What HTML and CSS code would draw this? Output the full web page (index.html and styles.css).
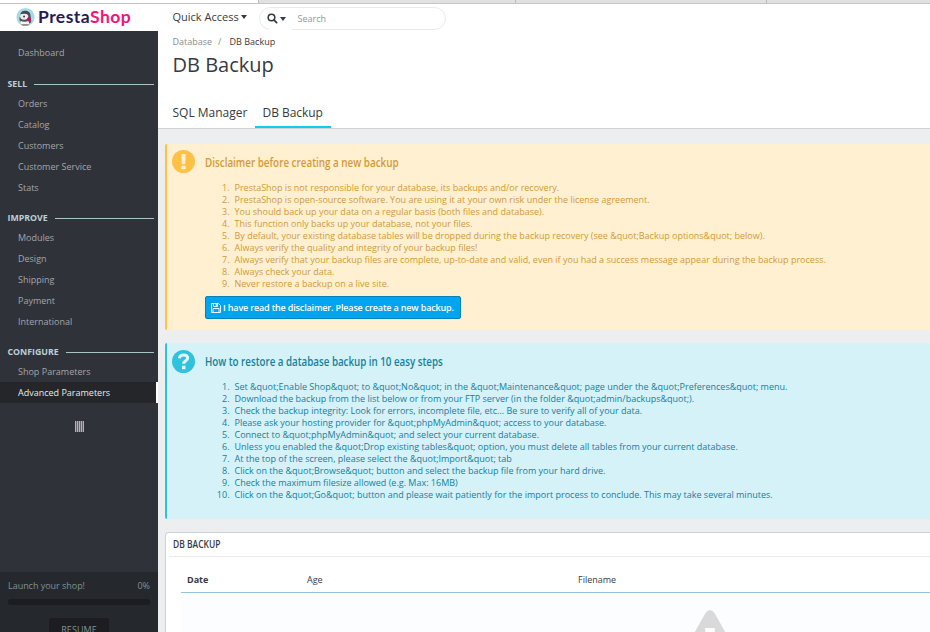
FILE: index.html
```html
<!DOCTYPE html>
<html lang="en">
<head>
<meta charset="utf-8">
<title>DB Backup</title>
<link rel="stylesheet" href="styles.css">
</head>
<body>
<div class="tabstrip"><span></span><span></span><span></span><span></span></div>
<div class="app">
  <aside class="sidebar">
    <div class="logo">
      <svg class="puffin" viewBox="0 0 20 20"><circle cx="10" cy="10" r="9.6" fill="#a4dbe8"/><path d="M4 14c-1-3 0-5 1-6 0-4 3-5 6-4.500 3 .5 4.500 3 4.500 6l.5 6c-3 3-9 3-12-1.500z" fill="#50545e"/><ellipse cx="8.600" cy="9.500" rx="4.300" ry="3.300" fill="#f1eeea"/><path d="M5 14c2 1.500 6 1.500 8 0l1 3c-3 2-7 2-9 0z" fill="#f7f7f5"/><path d="M4.500 7c2-4.500 8-4.500 10.500 0l-2 .5c-3-1.500-5-1.500-8.500-.5z" fill="#464a54"/><circle cx="8.500" cy="9.500" r="1" fill="#303544"/><path d="M12 11c2-2 4 0 4 3l-2-.5-2 1z" fill="#df0067"/><path d="M5 17.300h9l-2 2H7z" fill="#a58d79"/></svg>
      <span class="brand"><b>Presta</b><i>Shop</i></span>
    </div>
    <nav class="menu">
      <a class="item first">Dashboard</a>
      <h3>SELL</h3>
      <a class="item">Orders</a><a class="item">Catalog</a><a class="item">Customers</a><a class="item">Customer Service</a><a class="item">Stats</a>
      <h3>IMPROVE</h3>
      <a class="item">Modules</a><a class="item">Design</a><a class="item">Shipping</a><a class="item">Payment</a><a class="item">International</a>
      <h3>CONFIGURE</h3>
      <a class="item">Shop Parameters</a><a class="item active">Advanced Parameters</a>
      <div class="grip"></div>
    </nav>
    <div class="launch">
      <div class="launch-row"><span>Launch your shop!</span><span>0%</span></div>
      <div class="progress"></div>
      <div class="resume">RESUME</div>
    </div>
  </aside>
  <main>
    <header>
      <div class="toolbar">
        <span class="quick">Quick Access</span><span class="caret"></span>
        <div class="search">
          <div class="search-type"><svg viewBox="0 0 12 12"><circle cx="4.900" cy="4.900" r="3.600" fill="none" stroke="#363a41" stroke-width="1.700"/><path d="M7.500 7.500l3 3" stroke="#363a41" stroke-width="2" stroke-linecap="round"/></svg><span class="caret"></span></div>
          <span class="placeholder">Search</span>
        </div>
      </div>
      <div class="crumbs"><span>Database</span><i>/</i><b>DB Backup</b></div>
      <h1>DB Backup</h1>
      <div class="tabs"><a class="tab">SQL Manager</a><a class="tab current">DB Backup</a></div>
    </header>
    <section class="alert warn">
      <svg class="badge" viewBox="0 0 23 23"><circle cx="11.500" cy="11.500" r="11.500" fill="#ffc046"/><path d="M9.300 4h4.400l-.5 10.300H9.800zM9.400 15.700h4.200v3.600H9.400z" fill="#fff0d2"/></svg>
      <div class="copy">
        <h2><span class="h-warn">Disclaimer before creating a new backup</span></h2>
        <ol>
          <li>PrestaShop is not responsible for your database, its backups and/or recovery.</li>
          <li>PrestaShop is open-source software. You are using it at your own risk under the license agreement.</li>
          <li>You should back up your data on a regular basis (both files and database).</li>
          <li>This function only backs up your database, not your files.</li>
          <li>By default, your existing database tables will be dropped during the backup recovery (see &amp;quot;Backup options&amp;quot; below).</li>
          <li>Always verify the quality and integrity of your backup files!</li>
          <li>Always verify that your backup files are complete, up-to-date and valid, even if you had a success message appear during the backup process.</li>
          <li>Always check your data.</li>
          <li>Never restore a backup on a live site.</li>
        </ol>
        <button><svg viewBox="0 0 10 10"><path d="M.5.5h7l2 2v7h-9zM2.500.5v3h4v-3M5.300 1v2M2 9.500v-4h6v4" fill="none" stroke="#fff" stroke-width=".9"/></svg><span>I have read the disclaimer. Please create a new backup.</span></button>
      </div>
    </section>
    <section class="alert info">
      <svg class="badge" viewBox="0 0 23 23"><circle cx="11.500" cy="11.500" r="11.500" fill="#2fc2dd"/><path d="M7.300 8.300c.5-4.600 8.600-4.300 8.400-.3 0 2.700-4 2.800-4 5.700" fill="none" stroke="#e4f8fc" stroke-width="3"/><path d="M10 15.700h3.500v3.500H10z" fill="#e4f8fc"/></svg>
      <div class="copy">
        <h2><span class="h-info">How to restore a database backup in 10 easy steps</span></h2>
        <ol>
          <li>Set &amp;quot;Enable Shop&amp;quot; to &amp;quot;No&amp;quot; in the &amp;quot;Maintenance&amp;quot; page under the &amp;quot;Preferences&amp;quot; menu.</li>
          <li>Download the backup from the list below or from your FTP server (in the folder &amp;quot;admin/backups&amp;quot;).</li>
          <li>Check the backup integrity: Look for errors, incomplete file, etc... Be sure to verify all of your data.</li>
          <li>Please ask your hosting provider for &amp;quot;phpMyAdmin&amp;quot; access to your database.</li>
          <li>Connect to &amp;quot;phpMyAdmin&amp;quot; and select your current database.</li>
          <li>Unless you enabled the &amp;quot;Drop existing tables&amp;quot; option, you must delete all tables from your current database.</li>
          <li>At the top of the screen, please select the &amp;quot;Import&amp;quot; tab</li>
          <li>Click on the &amp;quot;Browse&amp;quot; button and select the backup file from your hard drive.</li>
          <li>Check the maximum filesize allowed (e.g. Max: 16MB)</li>
          <li>Click on the &amp;quot;Go&amp;quot; button and please wait patiently for the import process to conclude. This may take several minutes.</li>
        </ol>
      </div>
    </section>
    <section class="panel">
      <div class="panel-head"><span>DB BACKUP</span></div>
      <div class="table">
        <div class="thead"><b>Date</b><span>Age</span><span>Filename</span></div>
        <div class="empty"><svg viewBox="0 0 48 42"><path d="M19.500 3q4.500-6 9 0L47 36q2 6-4 6H5q-6 0-4-6z" fill="#d9d9d9"/><path d="M19 18h10l-1 13h-8zM19.500 33h9v6h-9z" fill="#fcfdfe"/></svg></div>
      </div>
    </section>
  </main>
</div>
</body>
</html>
```
FILE: styles.css
```css
* { box-sizing: border-box; }
body { margin: 0; width: 930px; height: 632px; overflow: hidden; background: #edeef0; font-family: "Open Sans", sans-serif; font-size: 9px; color: #363a41; }
h1, h2, h3, ol { margin: 0; padding: 0; font-weight: 400; }
.tabstrip { height: 4px; display: grid; grid-template-columns: 259px 257px 251px 1fr; border-bottom: 1px solid #c6c6c6; background: #e1e1e1; }
.tabstrip span { border-right: 1px solid #bcbcbc; }
.tabstrip span:first-child { background: #fff; }
.tabstrip span:last-child { border: 0; }
.app { display: flex; height: 628px; }
.sidebar { width: 158px; flex: none; display: flex; flex-direction: column; background: #30323a; }
.logo { height: 27px; flex: none; background: #fff; display: flex; padding: 3px 0 0 16px; gap: 3px; }
.puffin { width: 19px; height: 20px; flex: none; }
.brand { font: 700 17.5px/20px Lato, sans-serif; letter-spacing: .45px; white-space: nowrap; color: #251b5b; }
.brand b { font-weight: 700; }
.brand i { font-style: normal; color: #f5127b; }
.menu { flex: 1; padding-top: 11px; }
.item { display: block; height: 21px; line-height: 21px; padding-left: 18px; color: #a3a5a8; }
.menu h3 { display: flex; align-items: center; gap: 7px; height: 19px; margin-top: 10px; padding: 1px 4px 0 7.5px; font-size: 8.8px; font-weight: 700; color: #bad0d8; }
.menu .first + h3 { margin-top: 11px; }
.menu h3::after { content: ""; flex: 1; height: 1px; background: #a8c5cc; }
.item.active { background: #242629; color: #e8e9ea; border-right: 2px solid #fff; }
.grip { width: 9px; height: 11px; margin: 18px 0 0 75px; background: repeating-linear-gradient(90deg, #b1b2b4 0 1px, #62646a 1px 2px); }
.launch { height: 60px; flex: none; background: #25282c; color: #7f9297; padding: 7px 8px 0; }
.launch-row { display: flex; justify-content: space-between; height: 14px; line-height: 14px; }
.launch-row span:first-child { letter-spacing: -.03px; }
.progress { height: 6px; margin-top: 6px; border-radius: 3px; background: #1c1d20; }
.resume { width: 60px; height: 26px; margin: 13px auto 0; border-radius: 2px; background: #1c1d20; text-align: center; line-height: 23px; letter-spacing: .1px; }
main { flex: 1; min-width: 0; }
header { height: 125px; background: #fff; border-bottom: 1px solid #d0d2d5; padding-left: 14.5px; overflow: hidden; }
.toolbar { display: flex; align-items: flex-start; height: 29px; padding-top: 3px; }
.quick { font-size: 11px; line-height: 19px; white-space: nowrap; width: 68.5px; }
.caret { border: 3.5px solid transparent; border-top: 4px solid #363a41; border-bottom: 0; }
.toolbar > .caret { margin-top: 8px; }
.search { display: flex; align-items: center; width: 187px; height: 23px; margin-left: 11.5px; border: 1px solid #e9eaeb; border-radius: 12px; }
.search-type { display: flex; align-items: center; gap: 2px; height: 23px; width: 32px; padding-left: 7px; background: linear-gradient(#fff, #fff) 9px 100% / 23px 2px no-repeat; }
.search-type svg { width: 11px; height: 11px; }
.placeholder { color: #969799; padding-left: 6px; }
.crumbs { display: flex; height: 18px; line-height: 18px; color: #8b8d91; }
.crumbs i { width: 17.5px; padding-left: 6px; color: #72a446; font-style: normal; }
.crumbs b { font-weight: 400; color: #363a41; }
h1 { margin-top: 1px; font-size: 20px; line-height: 26px; }
.tabs { display: flex; margin-top: 19px; height: 31px; font-size: 12px; line-height: 31px; }
.tab { width: 82.5px; white-space: nowrap; }
.current { width: 76px; padding-left: 7.5px; border-bottom: 2px solid #0fcce8; letter-spacing: -.04px; }
.alert { display: flex; margin: 15px 0 0 7px; border-left: 2px solid; border-radius: 2px 0 0 2px; overflow: hidden; white-space: nowrap; }
.warn { height: 186px; background: #fff0d2; border-color: #ffc046; color: #d29a38; }
.info { height: 176px; margin-top: 13px; background: #d5f2f9; border-color: #2fc2dd; color: #148199; }
.badge { width: 23px; height: 23px; margin: 6px 9px 0 5px; flex: none; }
.info .badge { margin-top: 7px; }
.copy h2 { height: 20px; margin-top: 9px; padding-left: .5px; font-size: 12.5px; line-height: 20px; }
h2 span, .panel-head span { display: inline-block; transform-origin: 0 50%; font-weight: 600; transform: scaleX(.77); }
h2 .h-warn { transform: scaleX(.788); }
h2 .h-info { transform: scaleX(.78); }
ol { margin: 9px 0 0; counter-reset: step; }
li { display: flex; gap: 5px; height: 12px; line-height: 12px; counter-increment: step; }
li::before { content: counter(step) "."; width: 25.5px; text-align: right; }
button { display: flex; align-items: center; gap: 2px; margin: 6px 0 0 1px; width: 256px; height: 23px; padding: 0 5px; border: 1px solid #0582bb; border-radius: 2px; background: #00a4ef; color: #fff; font: 600 9px "Open Sans", sans-serif; letter-spacing: -.16px; white-space: nowrap; }
button svg { width: 10px; height: 10px; flex: none; }
.panel { height: 120px; margin: 13px 0 0 7px; border: 1px solid #c9d2da; border-right: 0; border-radius: 4px 0 0; background: #fff; }
.panel-head { height: 24px; margin-left: 3px; padding-left: 4px; border-bottom: 1px solid #e9e9eb; font-size: 11px; line-height: 22px; }
.table { margin-left: 15px; }
.thead { display: grid; grid-template-columns: 120px 271px 1fr; height: 36px; line-height: 45px; padding-left: 6px; border-bottom: 1px solid #91c6dc; }
.empty { height: 60px; padding: 17px 0 0 505px; background: #fcfdfe; }
.empty svg { width: 48px; height: 42px; }
```
